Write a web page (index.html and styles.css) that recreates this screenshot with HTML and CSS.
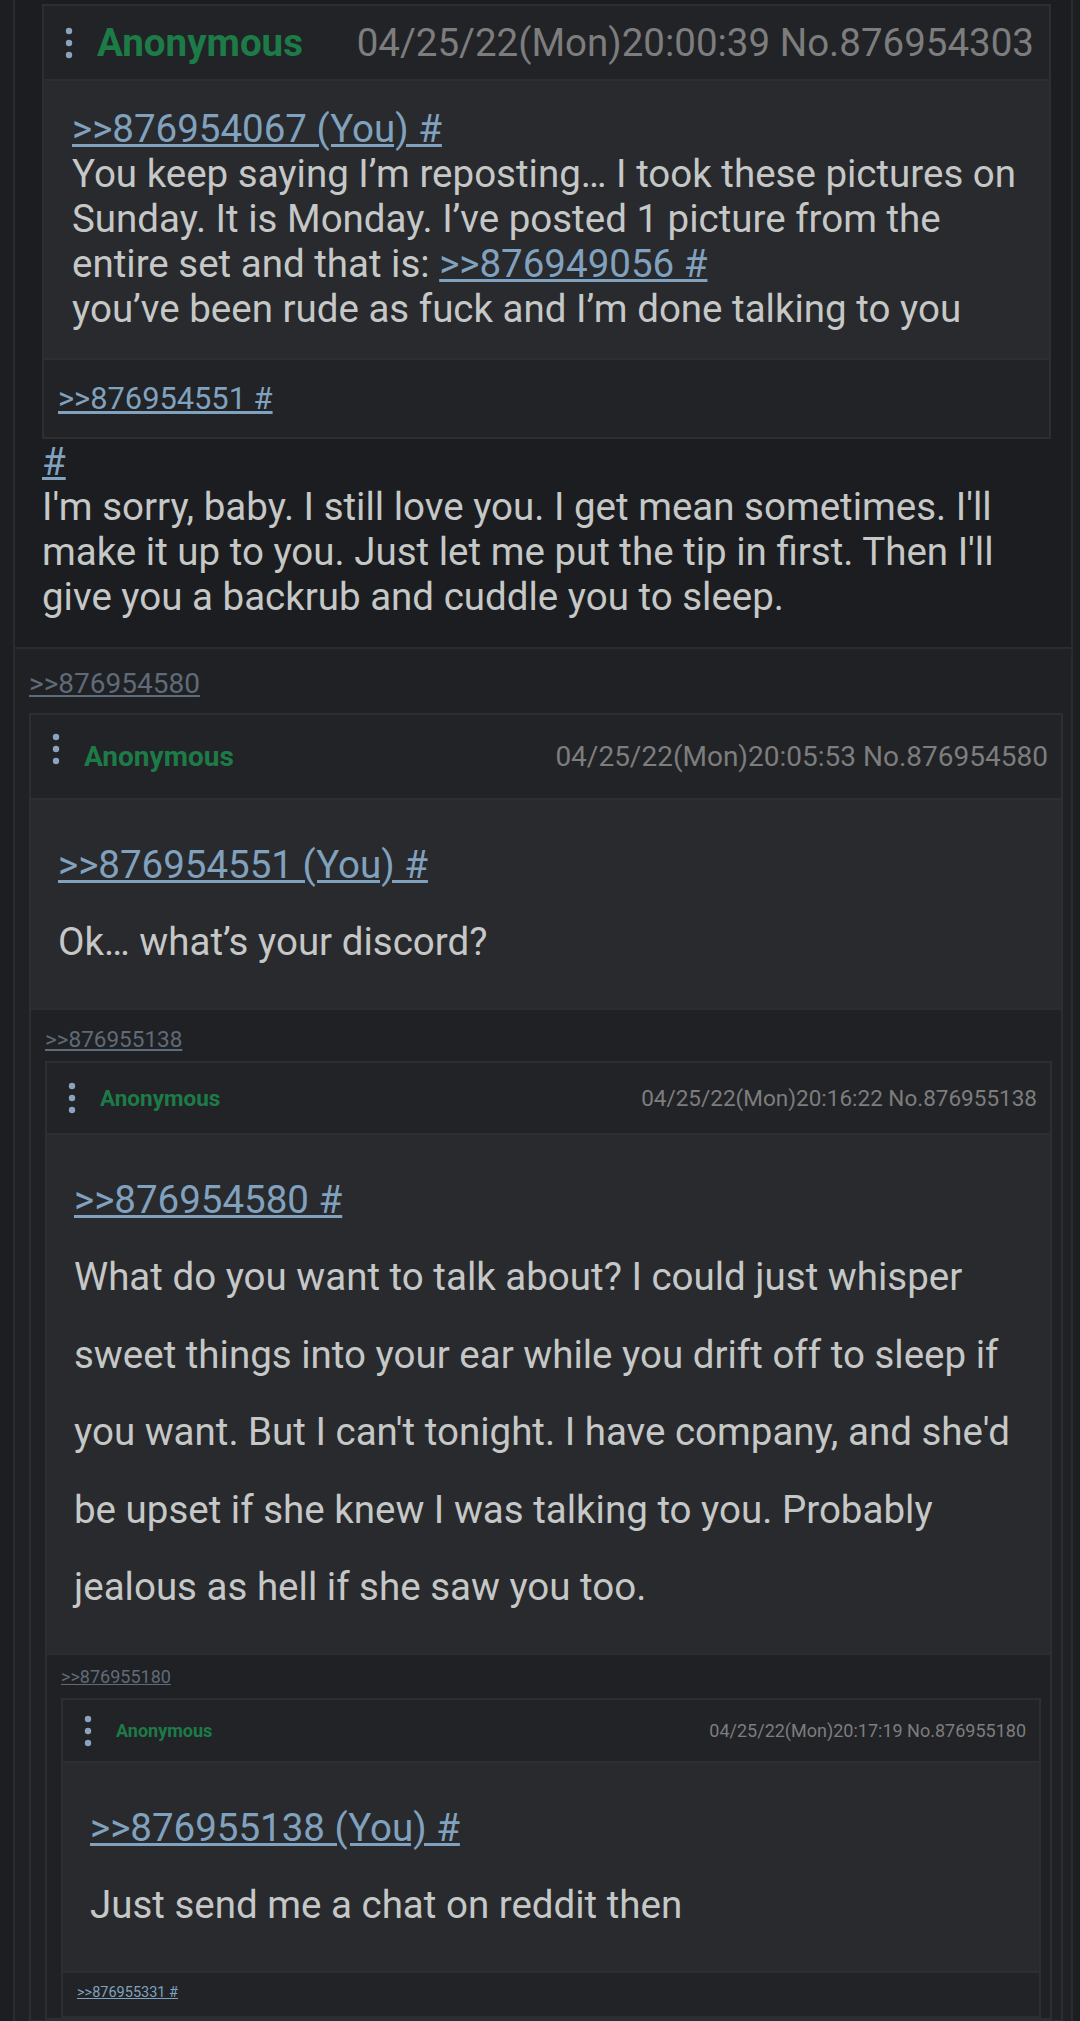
FILE: index.html
```html
<!DOCTYPE html>
<html lang="en">
<head>
<meta charset="utf-8">
<title>Thread</title>
<link rel="stylesheet" href="styles.css">
</head>
<body>
<div class="viewport">
  <div class="root">
    <div class="root-body">
      <div class="post quote-post">
        <div class="post-head head-q">
          <svg class="dots" viewBox="0 0 8 32" width="8" height="32"><circle cx="4" cy="4" r="3.2"/><circle cx="4" cy="16" r="3.2"/><circle cx="4" cy="28" r="3.2"/></svg>
          <span class="name">Anonymous</span>
          <span class="meta">04/25/22(Mon)20:00:39 No.876954303</span>
        </div>
        <div class="quote-body">
          <a href="#">&gt;&gt;876954067 (You) #</a><br>
          You keep saying I’m reposting… I took these pictures on<br>
          Sunday. It is Monday. I’ve posted 1 picture from the<br>
          entire set and that is: <a href="#">&gt;&gt;876949056 #</a><br>
          you’ve been rude as fuck and I’m done talking to you
        </div>
        <div class="post-foot foot-q"><a href="#">&gt;&gt;876954551 #</a></div>
      </div>
      <div class="root-text">
        <a href="#">#</a><br>
        I'm sorry, baby. I still love you. I get mean sometimes. I'll<br>
        make it up to you. Just let me put the tip in first. Then I'll<br>
        give you a backrub and cuddle you to sleep.
      </div>
    </div>

    <div class="replies r1">
      <a class="backlink" href="#">&gt;&gt;876954580</a>
      <div class="post">
        <div class="post-head head-1">
          <svg class="dots dots-raise" viewBox="0 0 8 32" width="8" height="32"><circle cx="4" cy="4" r="3.2"/><circle cx="4" cy="16" r="3.2"/><circle cx="4" cy="28" r="3.2"/></svg>
          <span class="name">Anonymous</span>
          <span class="meta">04/25/22(Mon)20:05:53 No.876954580</span>
        </div>
        <div class="post-body body-short">
          <a href="#">&gt;&gt;876954551 (You) #</a><br>
          Ok… what’s your discord?
        </div>

        <div class="replies r2">
          <a class="backlink" href="#">&gt;&gt;876955138</a>
          <div class="post">
            <div class="post-head head-2">
              <svg class="dots" viewBox="0 0 8 32" width="8" height="32"><circle cx="4" cy="4" r="3.2"/><circle cx="4" cy="16" r="3.2"/><circle cx="4" cy="28" r="3.2"/></svg>
              <span class="name">Anonymous</span>
              <span class="meta">04/25/22(Mon)20:16:22 No.876955138</span>
            </div>
            <div class="post-body body-long">
              <a href="#">&gt;&gt;876954580 #</a><br>
              What do you want to talk about? I could just whisper<br>
              sweet things into your ear while you drift off to sleep if<br>
              you want. But I can't tonight. I have company, and she'd<br>
              be upset if she knew I was talking to you. Probably<br>
              jealous as hell if she saw you too.
            </div>

            <div class="replies r3">
              <a class="backlink" href="#">&gt;&gt;876955180</a>
              <div class="post">
                <div class="post-head head-3">
                  <svg class="dots" viewBox="0 0 8 32" width="8" height="32"><circle cx="4" cy="4" r="3.2"/><circle cx="4" cy="16" r="3.2"/><circle cx="4" cy="28" r="3.2"/></svg>
                  <span class="name">Anonymous</span>
                  <span class="meta">04/25/22(Mon)20:17:19 No.876955180</span>
                </div>
                <div class="post-body body-short">
                  <a href="#">&gt;&gt;876955138 (You) #</a><br>
                  Just send me a chat on reddit then
                </div>
                <div class="post-foot foot-3"><a href="#">&gt;&gt;876955331 #</a></div>
              </div>
            </div>
          </div>
        </div>
      </div>
    </div>
  </div>
</div>
</body>
</html>
```

FILE: styles.css
```css
* {
  box-sizing: border-box;
}

html,
body {
  margin: 0;
  padding: 0;
  background: #1d1e21;
}

body {
  font-family: Roboto, "Noto Sans", "Liberation Sans", sans-serif;
  color: #c5c8c6;
}

a {
  color: #81a2be;
  text-decoration: underline;
}

.viewport {
  height: 2021px;
  overflow: hidden;
  padding: 0 7px 0 13px;
}

.root {
  border-left: 2px solid #2a2b2f;
  border-right: 2px solid #2a2b2f;
}

.root-body {
  background: #1c1d20;
  padding: 4px 20px 28px 27px;
}

/* generic post box */
.post {
  border: 2px solid #2c2e32;
  background: #292a2e;
}

.post-head {
  display: flex;
  align-items: center;
  background: #222327;
  border-bottom: 2px solid #2c2e32;
  padding: 0 13px 0 21px;
  white-space: nowrap;
}

.dots {
  flex: none;
  fill: #8ba3bd;
}

.dots-raise {
  margin-bottom: 16px;
}

.name {
  margin-left: 24px;
  color: #1d7b47;
  font-weight: 700;
}

.meta {
  margin-left: auto;
  color: #7d7d7d;
}

.head-q {
  height: 75px;
  font-size: 38.5px;
  padding-right: 15px;
}

.head-1 {
  height: 85px;
  font-size: 28px;
}

.head-2 {
  height: 72px;
  font-size: 22.5px;
}

.head-3 {
  height: 63px;
  font-size: 18px;
}

/* quoted post at the top */
.quote-body {
  font-size: 38.5px;
  line-height: 45px;
  padding: 25px 20px 27px 28px;
}

.post-foot {
  background: #222327;
  border-top: 2px solid #2c2e32;
  padding-left: 14px;
}

.foot-q {
  font-size: 30.8px;
  padding-top: 20px;
  padding-bottom: 20px;
}

.foot-3 {
  font-size: 14.5px;
  padding-top: 11px;
  padding-bottom: 15px;
}

.root-text {
  font-size: 38.5px;
  line-height: 45px;
}

/* nested post bodies */
.post-body {
  font-size: 38.5px;
  line-height: 76.5px;
  padding: 27px 20px 28px 27px;
}

.body-long {
  line-height: 77.4px;
  padding-top: 26px;
  padding-bottom: 28px;
}

/* reply areas */
.replies {
  background: #202124;
  border-top: 2px solid #2a2c30;
  display: flex;
  flex-direction: column;
  align-items: flex-start;
}

.replies > .post {
  align-self: stretch;
}

.backlink {
  display: block;
  color: #5f6b78;
}

.r1 {
  padding: 18px 8px 0 14px;
}

.r1 > .backlink {
  font-size: 28px;
  margin-bottom: 13px;
}

.r2 {
  padding: 16px 9px 0 14px;
}

.r2 > .backlink {
  font-size: 22.5px;
  margin-bottom: 9px;
}

.r3 {
  padding: 11px 9px 0 14px;
}

.r3 > .backlink {
  font-size: 18px;
  margin-bottom: 11px;
}
```
